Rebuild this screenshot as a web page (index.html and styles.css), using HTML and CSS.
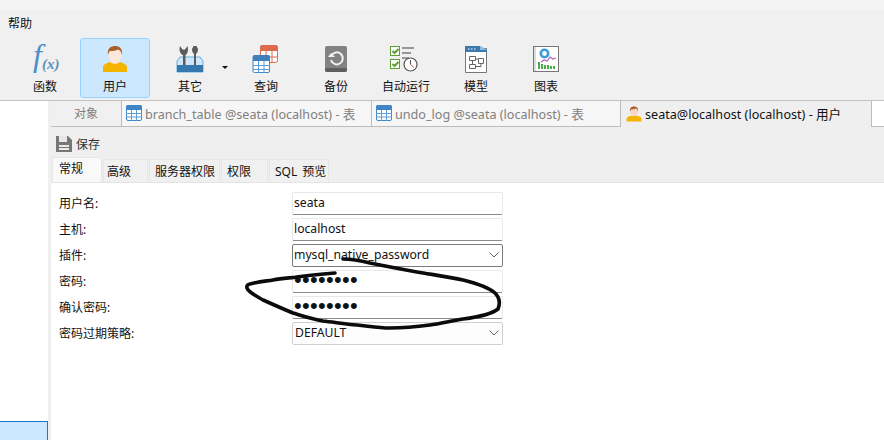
FILE: index.html
```html
<!DOCTYPE html>
<html lang="zh-CN">
<head>
<meta charset="utf-8">
<title>seata@localhost</title>
<link rel="stylesheet" href="styles.css">
</head>
<body>
<div class="app">
  <div class="titlestrip"></div>
  <div class="menubar"><span>帮助</span></div>
  <div class="toolbar">
    <div class="tool">
      <svg class="ticon ticon-fx" viewBox="0 0 28 28"><text x="2" y="21" class="fx-f">f</text><text x="11" y="24" class="fx-x">(x)</text></svg>
      <span>函数</span>
    </div>
    <div class="tool tool-on">
      <svg class="ticon" viewBox="0 0 28 28"><path d="M2 27v-5c0-2.500 3-3.500 7-5h10c4 1.500 7 2.500 7 5v5z" fill="#f4b400"/><path d="M9 17q5 4 10 0l-1-3h-8z" fill="#fbe3d6"/><ellipse cx="14" cy="9.500" rx="6.500" ry="8" fill="#fde6da"/><path d="M7 10C6 3 10 1 14 1s8 2 7 9c-.5-3-2-5-4-5.500C15 6 10 6 9 6c-1 1-1.500 2-2 4z" fill="#a9612b"/></svg>
      <span>用户</span>
    </div>
    <div class="tool tool-other">
      <svg class="ticon" viewBox="0 0 28 28"><path d="M1 16l3-4h20l3 4v11H1z" fill="#cfe6f8" stroke="#62aee6"/><rect x="1" y="20" width="26" height="7" fill="#3478ae"/><path d="M7 20V10C3.500 9 3 4 4 1l2.500 3.500h2.500L11.500 1c1 3 .5 8-2 9v10z" fill="#5b5b5b"/><path d="M18 20V9c-1.500-1-2-3-2-5l1.500-3h3L22 4c0 2-.5 4-2 5v11z" fill="#5b5b5b"/></svg>
      <span>其它</span>
    </div>
    <svg class="drop" viewBox="0 0 6 3"><path d="M0 0h6L3 3z" fill="#111"/></svg>
    <div class="tool">
      <svg class="ticon" viewBox="0 0 28 28"><rect x="8.500" y=".5" width="17" height="17" rx="2" fill="#fff" stroke="#dd6a4c"/><path d="M8 3a2.500 2.500 0 0 1 3-3h12a3 3 0 0 1 3 3v3H8z" fill="#dd6a4c"/><path d="M14 6v12M20 6v12M18 12h8" stroke="#dd6a4c"/><rect x="1" y="10.500" width="16.500" height="17" rx="1.500" fill="#fff" stroke="#3f86c6"/><path d="M1 12a2 2 0 0 1 2-2h13a2 2 0 0 1 2 2v4H1z" fill="#3f7fbb"/><path d="M6.500 16v12M12 16v12M1 20.500h17M1 24.500h17" stroke="#5a9ed8"/></svg>
      <span>查询</span>
    </div>
    <div class="tool">
      <svg class="ticon" viewBox="0 0 28 28"><rect x="3" y="1" width="22" height="26" rx="2" fill="#828282"/><path d="M3 23h22v2a2 2 0 0 1-2 2H5a2 2 0 0 1-2-2z" fill="#5f5f5f"/><path d="M9.500 10.500A6 6 0 1 1 9 15" fill="none" stroke="#f2f2f2" stroke-width="2"/><path d="M6 12h7l-4-4z" fill="#f2f2f2"/></svg>
      <span>备份</span>
    </div>
    <div class="tool">
      <svg class="ticon ticon-wide" viewBox="0 0 32 28"><rect x=".5" y="1.500" width="9" height="9" fill="#fff" stroke="#5f9e32"/><rect x=".5" y="14.500" width="9" height="9" fill="#fff" stroke="#5f9e32"/><path d="M2.500 6l2 2 4-4M2.500 19l2 2 4-4" fill="none" stroke="#5f9e32" stroke-width="2"/><path d="M12 3h12M12 8h9M12 13h7" stroke="#979797" stroke-width="2"/><circle cx="20.500" cy="19.500" r="6.500" fill="#fff" stroke="#555" stroke-width="1.200"/><path d="M20.500 15v4.500" stroke="#555"/><path d="M20.500 19.500l3.500 3" stroke="#e2604a"/></svg>
      <span>自动运行</span>
    </div>
    <div class="tool">
      <svg class="ticon" viewBox="0 0 28 28"><path d="M3.500 3.500h21v24h-21z" fill="#fff" stroke="#777"/><path d="M3 1h15l7 4v2H3z" fill="#3b79ad"/><path d="M18 1l7 4h-7z" fill="#8dc0e8"/><path d="M6 4h1.500M9 4h1.500M12 4h1.500" stroke="#fff"/><path d="M7.500 11.500h6v4h-6zM16.500 13.500h5v5h-5zM7.500 19.500h6v4h-6z" fill="none" stroke="#666"/><path d="M13.500 14h3M10.500 15.500v4M13.500 21.500h5.500v-3" fill="none" stroke="#666"/></svg>
      <span>模型</span>
    </div>
    <div class="tool">
      <svg class="ticon" viewBox="0 0 28 28"><rect x="1.500" y="1.500" width="25" height="25" fill="#fff" stroke="#777"/><path d="M3 2v24" stroke="#bbb"/><circle cx="12.500" cy="8.500" r="3.700" fill="none" stroke="#3d9bd8" stroke-width="2.600"/><path d="M9 17l3-2 3 1 3-4 3 2 3-1" fill="none" stroke="#b45fc0" stroke-width="1.200"/><path d="M7 24v-7M10 24v-5M13 24v-4M16 24v-4M19 24v-3M22 24v-3" stroke="#37a53a" stroke-width="1.800"/></svg>
      <span>图表</span>
    </div>
  </div>
  <div class="main">
    <aside class="sidebar"><div class="side-selected"></div></aside>
    <section class="workspace">
      <div class="doctabs">
        <div class="doctab doctab-obj">对象</div>
        <div class="doctab doctab-file">
          <svg class="tabicon" viewBox="0 0 16 16"><rect x=".5" y=".5" width="15" height="15" rx="1.500" fill="#fff" stroke="#3f86c6"/><path d="M0 2a2 2 0 0 1 2-2h12a2 2 0 0 1 2 2v3H0z" fill="#3f86c6"/><path d="M5.500 5v11M10.500 5v11M0 8.500h16M0 12h16" stroke="#5a9ed8"/></svg>
          <span>branch_table @seata (localhost) - 表</span>
        </div>
        <div class="doctab doctab-file">
          <svg class="tabicon" viewBox="0 0 16 16"><rect x=".5" y=".5" width="15" height="15" rx="1.500" fill="#fff" stroke="#3f86c6"/><path d="M0 2a2 2 0 0 1 2-2h12a2 2 0 0 1 2 2v3H0z" fill="#3f86c6"/><path d="M5.500 5v11M10.500 5v11M0 8.500h16M0 12h16" stroke="#5a9ed8"/></svg>
          <span>undo_log @seata (localhost) - 表</span>
        </div>
        <div class="doctab doctab-active">
          <svg class="tabicon" viewBox="0 0 28 28"><path d="M1 27v-5c0-2.500 3-3.500 8-5h10c5 1.500 8 2.500 8 5v5z" fill="#f4b400"/><ellipse cx="14" cy="9.500" rx="6.500" ry="8.500" fill="#f9d5c3"/><path d="M7 10C6 3 10 1 14 1s8 2 7 9c-.5-3-2-5-4-5.500C15 6 10 6 9 6c-1 1-1.500 2-2 4z" fill="#a9612b"/></svg>
          <span>seata@localhost (localhost) - 用户</span>
        </div>
        <div class="doctab-rest"></div>
      </div>
      <div class="savebar">
        <svg class="saveicon" viewBox="0 0 16 16"><path d="M0 0h12l4 4v12H0z" fill="#777"/><rect x="3" y="0" width="8" height="6" fill="#e8e8e8"/><rect x="3" y="9" width="10" height="5" fill="#e8e8e8"/><path d="M3 11.500h10" stroke="#777"/></svg>
        <span>保存</span>
      </div>
      <div class="subtabs">
        <div class="subtab subtab-on">常规</div>
        <div class="subtab subtab-a">高级</div>
        <div class="subtab subtab-b">服务器权限</div>
        <div class="subtab subtab-c">权限</div>
        <div class="subtab subtab-d">SQL 预览</div>
      </div>
      <div class="form">
        <label>用户名:</label><div class="field">seata</div>
        <label>主机:</label><div class="field">localhost</div>
        <label>插件:</label>
        <div class="field combo combo-focus"><span>mysql_native_password</span><svg class="chev" viewBox="0 0 10 6"><path d="M.5.5L5 5 9.500.5" fill="none" stroke="#666"/></svg></div>
        <label>密码:</label><div class="field pw">••••••••</div>
        <label>确认密码:</label><div class="field pw">••••••••</div>
        <label>密码过期策略:</label>
        <div class="field combo"><span>DEFAULT</span><svg class="chev" viewBox="0 0 10 6"><path d="M.5.5L5 5 9.500.5" fill="none" stroke="#666"/></svg></div>
      </div>
    </section>
  </div>
  <svg class="scribble" viewBox="0 0 884 440"><path d="M343 259 C352 259 362 261 370 263 C385 266 400 269 417 272 C435 275 450 277 463 280 C475 283 488 287 495 293 C500 298 500 304 498 309 C492 314 478 317 463 319 C450 321 440 324 430 325 C415 327 400 328 390 328 C378 328 368 326 357 325 C345 324 333 322 323 321 C312 319 303 316 293 313 C283 309 272 304 263 300 C256 296 248 292 247 288 C246 284 250 284 254 283 C262 281 268 281 273 280 C282 278 290 278 297 277 C310 275 322 274 335 273" fill="none" stroke="#0b0b0b" stroke-width="3.600" stroke-linecap="round"/></svg>
</div>
</body>
</html>
```
FILE: styles.css
```css
* { box-sizing: border-box; }
html, body { margin: 0; height: 100%; overflow: hidden; }
body { font-family: "Noto Sans", "Noto Sans CJK SC", sans-serif; font-size: 12px; color: #111; background: #f0f0f0; }
.app { position: relative; width: 884px; height: 440px; display: flex; flex-direction: column; }
.titlestrip { height: 10px; background: #f4f4f4; }
.menubar { height: 26px; padding-left: 8px; display: flex; align-items: center; background: #f0f0f0; }
.toolbar { height: 64px; padding: 2px 0 0 10px; display: flex; align-items: flex-start; background: #f0f0f0; }
.tool { width: 70px; height: 60px; display: flex; flex-direction: column; align-items: center; padding-top: 6px; border: 1px solid transparent; border-radius: 3px; }
.tool span { margin-top: 5px; line-height: 18px; }
.tool-on { background: #cce8ff; border-color: #99d1ff; }
.tool-other { margin-left: 5px; }
.ticon { width: 28px; height: 28px; flex: none; }
.ticon-wide { width: 32px; }
.ticon-fx { overflow: visible; }
.fx-f { font: italic 32px "Liberation Serif", serif; fill: #4a8fc6; }
.fx-x { font: italic bold 15px "Liberation Serif", serif; fill: #5a90bc; }
.drop { width: 6px; height: 3px; margin: 28px 3px 0 -3px; }
.main { flex: 1; min-height: 0; display: flex; border-top: 1px solid #c2c2c2; }
.sidebar { width: 48px; position: relative; background: #fff; flex: none; }
.side-selected { position: absolute; left: 0; right: 0; bottom: 0; height: 19px; background: #cce8ff; border-top: 1px solid #1979ca; border-right: 1px solid #1979ca; }
.workspace { flex: 1; min-width: 0; display: flex; flex-direction: column; padding-left: 3px; background: #efefef; }
.doctabs { height: 26px; display: flex; background: #f0f0f0; }
.doctab { height: 26px; padding-bottom: 1px; display: flex; align-items: center; border-bottom: 1px solid #bcbcbc; border-right: 1px solid #bcbcbc; color: #808080; background: #f6f6f6; font-size: 12.6px; white-space: nowrap; }
.doctab-obj { width: 71px; justify-content: center; background: #f0f0f0; font-size: 12px; }
.doctab-file { width: 250px; padding-left: 4px; gap: 3px; }
.doctab-file:nth-child(3) { width: 249px; }
.doctab-active { width: 251px; padding-left: 5px; gap: 3px; color: #111; background: #efefef; border-bottom: 0; }
.doctab-rest { flex: 1; height: 26px; background: #fff; border-bottom: 1px solid #bcbcbc; }
.tabicon { width: 16px; height: 16px; flex: none; }
.savebar { height: 31px; padding: 3px 0 0 5px; display: flex; align-items: center; gap: 4px; color: #333; }
.saveicon { width: 16px; height: 16px; }
.subtabs { height: 25px; display: flex; align-items: flex-end; gap: 1px; padding-left: 1px; border-bottom: 1px solid #e4e4e4; }
.subtab { height: 23px; padding-left: 5px; display: flex; align-items: center; background: #f0f0f0; border: 1px solid #e6e6e6; border-bottom: 0; white-space: nowrap; }
.subtab-on { width: 50px; height: 25px; padding-left: 6px; background: #f9f9f9; padding-bottom: 4px; }
.subtab-a { width: 45px; padding-left: 3px; }
.subtab-b { width: 71px; }
.subtab-c { width: 47px; }
.subtab-d { width: 60px; word-spacing: 2px; }
.form { flex: 1; background: #fff; padding: 9px 0 0 8px; display: grid; grid-template-columns: 233px 211px; grid-auto-rows: 23px; row-gap: 3px; align-content: start; }
.form label { display: flex; align-items: center; padding-bottom: 1px; }
.field { display: flex; align-items: center; justify-content: space-between; padding: 0 3px 2px 1px; background: #fff; border: 1px solid #e8e8e8; border-bottom: 1px solid #8a8a8a; border-radius: 2px; font-size: 12.2px; }
.combo { background: #fdfdfd; padding-left: 2px; border-color: #cfcfcf; }
.combo-focus { background: #fff; padding-left: 1px; border-color: #7a7a7a; }
.chev { width: 10px; height: 6px; }
.pw { font-family: "Liberation Sans", sans-serif; font-size: 22px; letter-spacing: .3px; line-height: 1; padding-bottom: 3px; }
.scribble { position: absolute; left: 0; top: 0; width: 884px; height: 440px; pointer-events: none; }
```
